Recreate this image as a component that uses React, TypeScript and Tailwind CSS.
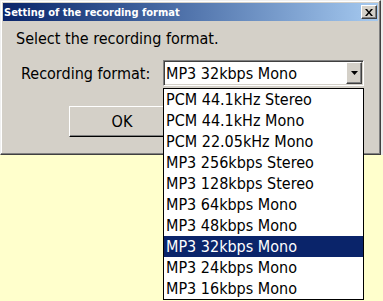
import { useState } from "react";

const formats = [
  "PCM 44.1kHz Stereo",
  "PCM 44.1kHz Mono",
  "PCM 22.05kHz Mono",
  "MP3 256kbps Stereo",
  "MP3 128kbps Stereo",
  "MP3 64kbps Mono",
  "MP3 48kbps Mono",
  "MP3 32kbps Mono",
  "MP3 24kbps Mono",
  "MP3 16kbps Mono",
];

// classic raised 3D edge
const raised =
  "border border-t-white border-l-white border-r-[#404040] border-b-[#404040] shadow-[inset_-1px_-1px_0_#808080]";

export default function App() {
  const [selected, setSelected] = useState("MP3 32kbps Mono");

  return (
    <div className="relative w-[383px] h-[301px] overflow-hidden bg-[#ffffcc] text-black font-['DejaVu_Sans_Condensed','DejaVu_Sans',sans-serif] font-stretch-condensed">
      {/* Dialog */}
      <div className="w-[381px] h-[155px] flex flex-col p-[2px] bg-[#d4d0c8] border border-t-[#f0f0f0] border-l-[#f0f0f0] border-r-[#404040] border-b-[#404040] shadow-[inset_-1px_-1px_0_#808080,inset_1px_1px_0_#ffffff,2px_0_0_#ececec]">
        {/* Title bar */}
        <div className="flex items-center justify-between h-[18px] pl-[1px] pr-[1px] bg-linear-to-r from-[#0a246a] to-[#a6caf0]">
          <span className="text-[11px] leading-none font-bold text-white whitespace-nowrap">
            Setting of the recording format
          </span>
          <button
            type="button"
            className={`flex items-center justify-center w-[16px] h-[14px] bg-[#d4d0c8] ${raised}`}
            aria-label="Close"
          >
            <svg width="8" height="7" viewBox="0 0 8 7">
              <path d="M0 0h2l2 2.5L6 0h2L5 3.5 8 7H6L4 4.5 2 7H0l3-3.5z" fill="#000" />
            </svg>
          </button>
        </div>

        {/* Body */}
        <div className="flex flex-col pl-[13px] pt-[8px]">
          <p className="text-[16px] leading-[19px] whitespace-nowrap">
            Select the recording format.
          </p>

          <div className="flex items-center mt-[12px]">
            <span className="w-[147px] pl-[5px] text-[16px] leading-[19px] whitespace-nowrap">
              Recording format:
            </span>
            <div className="flex w-[201px] h-[26px] border border-t-[#808080] border-l-[#808080] border-r-white border-b-white shadow-[inset_1px_1px_0_#404040,inset_-1px_-1px_0_#d4d0c8] p-[1px]">
              <div className="flex-1 flex items-center bg-white pl-[1px] text-[16px] leading-[19px] whitespace-nowrap">
                {selected}
              </div>
              <div className={`flex items-center justify-center w-[16px] bg-[#d4d0c8] ${raised}`}>
                <svg width="7" height="4" viewBox="0 0 7 4">
                  <path d="M0 0h7L3.5 4z" fill="#000" />
                </svg>
              </div>
            </div>
          </div>

          <div className="flex mt-[20px] ml-[53px]">
            <button
              type="button"
              className="flex items-center justify-center w-[106px] h-[31px] bg-[#d4d0c8] border border-t-white border-l-white border-r-black border-b-black shadow-[inset_-1px_-1px_0_#808080] text-[16px]"
            >
              OK
            </button>
          </div>
        </div>
      </div>

      {/* Open drop-down list */}
      <ul className="absolute left-[163px] top-[88px] w-[201px] h-[212px] bg-white border border-black">
        {formats.map((f) => (
          <li
            key={f}
            onClick={() => setSelected(f)}
            className={
              f === selected
                ? "h-[21px] leading-[21px] pl-[2px] text-[16px] whitespace-nowrap bg-[#0a246a] text-white"
                : "h-[21px] leading-[21px] pl-[2px] text-[16px] whitespace-nowrap"
            }
          >
            {f}
          </li>
        ))}
      </ul>
    </div>
  );
}
